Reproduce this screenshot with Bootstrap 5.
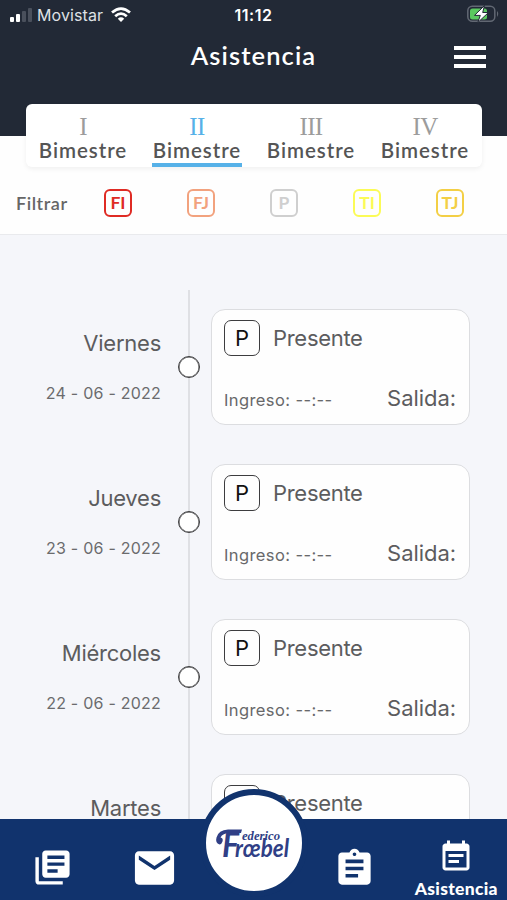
<!DOCTYPE html>
<html lang="es">
<head>
<meta charset="utf-8">
<meta name="viewport" content="width=device-width, initial-scale=1">
<title>Asistencia</title>
<link href="https://cdn.jsdelivr.net/npm/bootstrap@5.3.0/dist/css/bootstrap.min.css" rel="stylesheet">
<style>
body{font-family:Inter,sans-serif;color:#5c5c5e;background:#f5f6fa;line-height:1}
svg{display:block;flex:none}
.app{width:507px;height:900px}
.top{height:136px;background:#222936;color:#fff;flex:none}
.status{height:30px;padding:0 8px 0 9px;font-size:16px}
.carrier{color:#dfe1e5;letter-spacing:.1px}
.clock{font-weight:600;font-size:16px;letter-spacing:.5px}
.battery{margin-right:-2px;margin-top:-2px}
.titlebar{height:54px}
.titlebar h1{font:600 25.500px/1 Lato,sans-serif;letter-spacing:1.100px;position:relative;top:-1px}
.menu-icon{right:20px}
.geo{font-family:Lato,sans-serif;font-weight:600}
.filters{height:99px;background:#fefefe;border-bottom:1px solid #e9eaed;flex:none}
.tabs{width:456px;height:63px;margin:-32px 0 0 26px;border-radius:6px;background:#fff;box-shadow:0 2px 5px rgba(0,0,0,.06);position:relative}
.tab-item{width:114px;padding-top:10px}
.numeral{font:25px/25px "Liberation Serif",serif;letter-spacing:-.7px;color:#9c9c9c;height:25px}
.tab-name{font-size:20.500px;line-height:22px;letter-spacing:.95px;color:#555;width:90px;height:28px;white-space:nowrap;display:flex;justify-content:center}
.tab-item.active .numeral{color:#56b1e8}
.tab-item.active .tab-name{border-bottom:4px solid #56b1e8}
.filter-row{height:68px;padding:4px 43px 0 16px}
.filter-label{font-size:18px;letter-spacing:.55px;width:88px;color:#666}
.chip{width:28px;height:28px;border:2px solid;border-radius:6px;font:700 17.500px/1 Lato,sans-serif;margin-right:55px}
.chip:last-child{margin-right:0}
.timeline{flex:1;overflow:hidden;position:relative;padding-top:74px}
.timeline::before{content:"";position:absolute;left:188px;top:55px;bottom:0;width:2px;background:#dfe0e4}
.entry{height:116px;margin-bottom:39px;position:relative}
.when{width:161px;text-align:right;padding-top:22px}
.day{font-size:22px;line-height:24px;letter-spacing:-.25px}
.date{font-size:16px;line-height:20px;margin-top:28px;letter-spacing:.23px;color:#6b6b6d}
.dot{width:22px;height:22px;border:1.500px solid #3d3d3f;border-radius:50%;background:#fff;margin:47px 11px 0 17px;box-shadow:inset 0 0 0 .5px #3d3d3f}
.slip{width:259px;height:116px;border:1px solid #dcdde0;border-radius:14px;background:#fefefe;padding:10px 13px 12px 12px}
.state{width:36px;height:36px;border:1.500px solid #3d3d3f;border-radius:7px;color:#111;font-size:22px;margin-right:13px}
.label-lg{font-size:22px;line-height:28px;letter-spacing:-.3px}
.slip .exit{letter-spacing:-.05px}
.label-sm{font-size:16.500px;line-height:20px;letter-spacing:.4px;color:#68686a;padding-top:3px}
.bottom{height:81px;background:#11336d;flex:none;position:relative}
.nav-cell{width:101.400px;color:#fff}
.nav-text{font-size:17.500px;line-height:20px;letter-spacing:.3px;font-weight:900}
.brand-disc{position:absolute;left:200px;top:-30px;width:108px;height:108px;border:6px solid #11336d;border-radius:50%;background:#fff}
</style>
<script src="https://cdn.jsdelivr.net/npm/bootstrap@5.3.0/dist/js/bootstrap.bundle.min.js"></script>
</head>
<body>
<div class="app d-flex flex-column overflow-hidden">
  <header class="top">
    <div class="status d-flex align-items-center justify-content-between position-relative">
      <div class="d-flex align-items-center">
        <svg width="24" height="16" viewBox="0 0 24 16" fill="#fff"><rect x="1" y="10" width="4" height="5" rx="1"/><rect x="7" y="7" width="4" height="8" rx="1"/><g fill="#4a505c"><rect x="13" y="4" width="4" height="11" rx="1"/><rect x="19" y="1" width="4" height="14" rx="1"/></g></svg>
        <span class="carrier ms-1">Movistar</span>
        <svg class="ms-2" width="20" height="16" viewBox="0 0 20 16"><g fill="none" stroke="#fff" stroke-width="2.7"><path d="M1 5.6Q10-2.500 19 5.6"/><path d="M4.2 9.2Q10 3.900 15.800 9.2"/></g><path d="M6.8 11.800Q10 8.900 13.200 11.800L10 15z" fill="#fff"/></svg>
      </div>
      <span class="clock position-absolute start-50 translate-middle-x">11:12</span>
      <svg class="battery" width="35" height="20" viewBox="0 0 35 20"><rect x="1.8" y="2.3" width="27" height="15" rx="4.5" fill="none" stroke="#626873" stroke-width="1.5"/><path d="M31 7q2.500 2.500 0 6z" fill="#626873"/><rect x="4" y="4.5" width="17" height="11" rx="2.5" fill="#5ac95f"/><path d="M18.500 1.500L8.500 11.400h5.800L11.800 18.500 22.500 8.500h-5.800z" fill="#fff" stroke="#222936" stroke-width="1"/></svg>
    </div>
    <div class="titlebar d-flex align-items-center justify-content-center position-relative">
      <h1 class="m-0">Asistencia</h1>
      <svg class="menu-icon position-absolute" width="34" height="24" viewBox="0 0 34 24"><path d="M1 3h32M1 12h32M1 21h32" stroke="#fff" stroke-width="3.8"/></svg>
    </div>
  </header>
  <section class="filters">
    <nav class="tabs d-flex">
      <div class="tab-item d-flex flex-column align-items-center"><span class="numeral">I</span><span class="tab-name geo">Bimestre</span></div>
      <div class="tab-item active d-flex flex-column align-items-center"><span class="numeral">II</span><span class="tab-name geo">Bimestre</span></div>
      <div class="tab-item d-flex flex-column align-items-center"><span class="numeral">III</span><span class="tab-name geo">Bimestre</span></div>
      <div class="tab-item d-flex flex-column align-items-center"><span class="numeral">IV</span><span class="tab-name geo">Bimestre</span></div>
    </nav>
    <div class="filter-row d-flex align-items-center">
      <span class="filter-label geo">Filtrar</span>
      <span class="chip d-flex align-items-center justify-content-center" style="color:#df2b24">FI</span>
      <span class="chip d-flex align-items-center justify-content-center" style="color:#f2a27e">FJ</span>
      <span class="chip d-flex align-items-center justify-content-center" style="color:#cfcfcf">P</span>
      <span class="chip d-flex align-items-center justify-content-center" style="color:#fbfb57">TI</span>
      <span class="chip d-flex align-items-center justify-content-center" style="color:#f3cf45">TJ</span>
    </div>
  </section>
  <main class="timeline">
    <div class="entry d-flex"><div class="when"><div class="day">Viernes</div><div class="date">24 - 06 - 2022</div></div><span class="dot"></span>
      <div class="slip d-flex flex-column justify-content-between"><div class="d-flex align-items-center"><span class="state d-flex align-items-center justify-content-center">P</span><span class="label-lg">Presente</span></div><div class="d-flex justify-content-between align-items-center"><span class="label-sm">Ingreso: --:--</span><span class="label-lg exit">Salida:</span></div></div></div>
    <div class="entry d-flex"><div class="when"><div class="day">Jueves</div><div class="date">23 - 06 - 2022</div></div><span class="dot"></span>
      <div class="slip d-flex flex-column justify-content-between"><div class="d-flex align-items-center"><span class="state d-flex align-items-center justify-content-center">P</span><span class="label-lg">Presente</span></div><div class="d-flex justify-content-between align-items-center"><span class="label-sm">Ingreso: --:--</span><span class="label-lg exit">Salida:</span></div></div></div>
    <div class="entry d-flex"><div class="when"><div class="day">Miércoles</div><div class="date">22 - 06 - 2022</div></div><span class="dot"></span>
      <div class="slip d-flex flex-column justify-content-between"><div class="d-flex align-items-center"><span class="state d-flex align-items-center justify-content-center">P</span><span class="label-lg">Presente</span></div><div class="d-flex justify-content-between align-items-center"><span class="label-sm">Ingreso: --:--</span><span class="label-lg exit">Salida:</span></div></div></div>
    <div class="entry d-flex"><div class="when"><div class="day">Martes</div></div><span class="dot invisible"></span>
      <div class="slip"><div class="d-flex align-items-center"><span class="state d-flex align-items-center justify-content-center">P</span><span class="label-lg">Presente</span></div></div></div>
  </main>
  <nav class="bottom d-flex">
    <div class="nav-cell d-flex justify-content-center pt-4 ps-1"><svg class="mt-1" width="41" height="41" viewBox="0 0 24 24" fill="currentColor"><path d="M4 6H2v14c0 1.100.900 2 2 2h14v-2H4V6zm16-4H8c-1.100 0-2 .900-2 2v12c0 1.100.900 2 2 2h12c1.100 0 2-.900 2-2V4c0-1.100-.900-2-2-2zm-1 9H9V9h10v2zm-4 4H9v-2h6v2zm4-8H9V5h10v2z"/></svg></div>
    <div class="nav-cell d-flex justify-content-center pt-4 ps-1"><svg width="47" height="50" viewBox="0 0 24 24" preserveAspectRatio="none" fill="currentColor"><path d="M20 4H4c-1.100 0-2 .900-2 2v12c0 1.100.900 2 2 2h16c1.100 0 2-.900 2-2V6c0-1.100-.900-2-2-2zm0 4l-8 5-8-5V6l8 5 8-5v2z"/></svg></div>
    <div class="nav-cell"></div>
    <div class="nav-cell d-flex justify-content-center pt-4"><svg class="mt-1" width="43" height="43" viewBox="0 0 24 24" preserveAspectRatio="none" fill="currentColor"><path d="M19 3h-4.180C14.400 1.840 13.300 1 12 1S9.600 1.840 9.180 3H5C3.900 3 3 3.900 3 5v14c0 1.100.900 2 2 2h14c1.100 0 2-.900 2-2V5c0-1.100-.900-2-2-2zm-7 0c.550 0 1 .450 1 1s-.450 1-1 1-1-.450-1-1 .450-1 1-1zm2 14H7v-2h7v2zm3-4H7v-2h10v2zm0-4H7V7h10v2z"/></svg></div>
    <div class="nav-cell d-flex flex-column align-items-center pt-3"><svg class="mt-1" width="36" height="36" viewBox="0 0 24 24" fill="currentColor"><path d="M17 10H7v2h10v-2zm2-7h-1V1h-2v2H8V1H6v2H5c-1.100 0-2 .900-2 2v14c0 1.100.900 2 2 2h14c1.100 0 2-.900 2-2V5c0-1.100-.900-2-2-2zm0 16H5V8h14v11zm-5-5H7v2h7v-2z"/></svg><span class="nav-text geo mt-1">Asistencia</span></div>
    <div class="brand-disc">
      <svg width="96" height="96" viewBox="0 0 96 96" fill="#303f86" font-family="Lato,sans-serif" font-weight="700" font-style="italic">
        <path d="M13.500 49.500q-4.500-1.500-3-7Q12.500 35 22 34.500h14l-1 3.500H24q-7.500 0-9.500 4.500 3 .5 2 4-1 3-3 3z"/>
        <text x="16" y="61.500" font-size="35" textLength="17" lengthAdjust="spacingAndGlyphs">F</text>
        <text x="36" y="45" font-size="13.500" textLength="38" lengthAdjust="spacingAndGlyphs" font-family="Liberation Serif,serif">ederico</text>
        <text x="29" y="61.500" font-size="25" textLength="54" lengthAdjust="spacingAndGlyphs">rœbel</text>
      </svg>
    </div>
  </nav>
</div>
</body>
</html>
